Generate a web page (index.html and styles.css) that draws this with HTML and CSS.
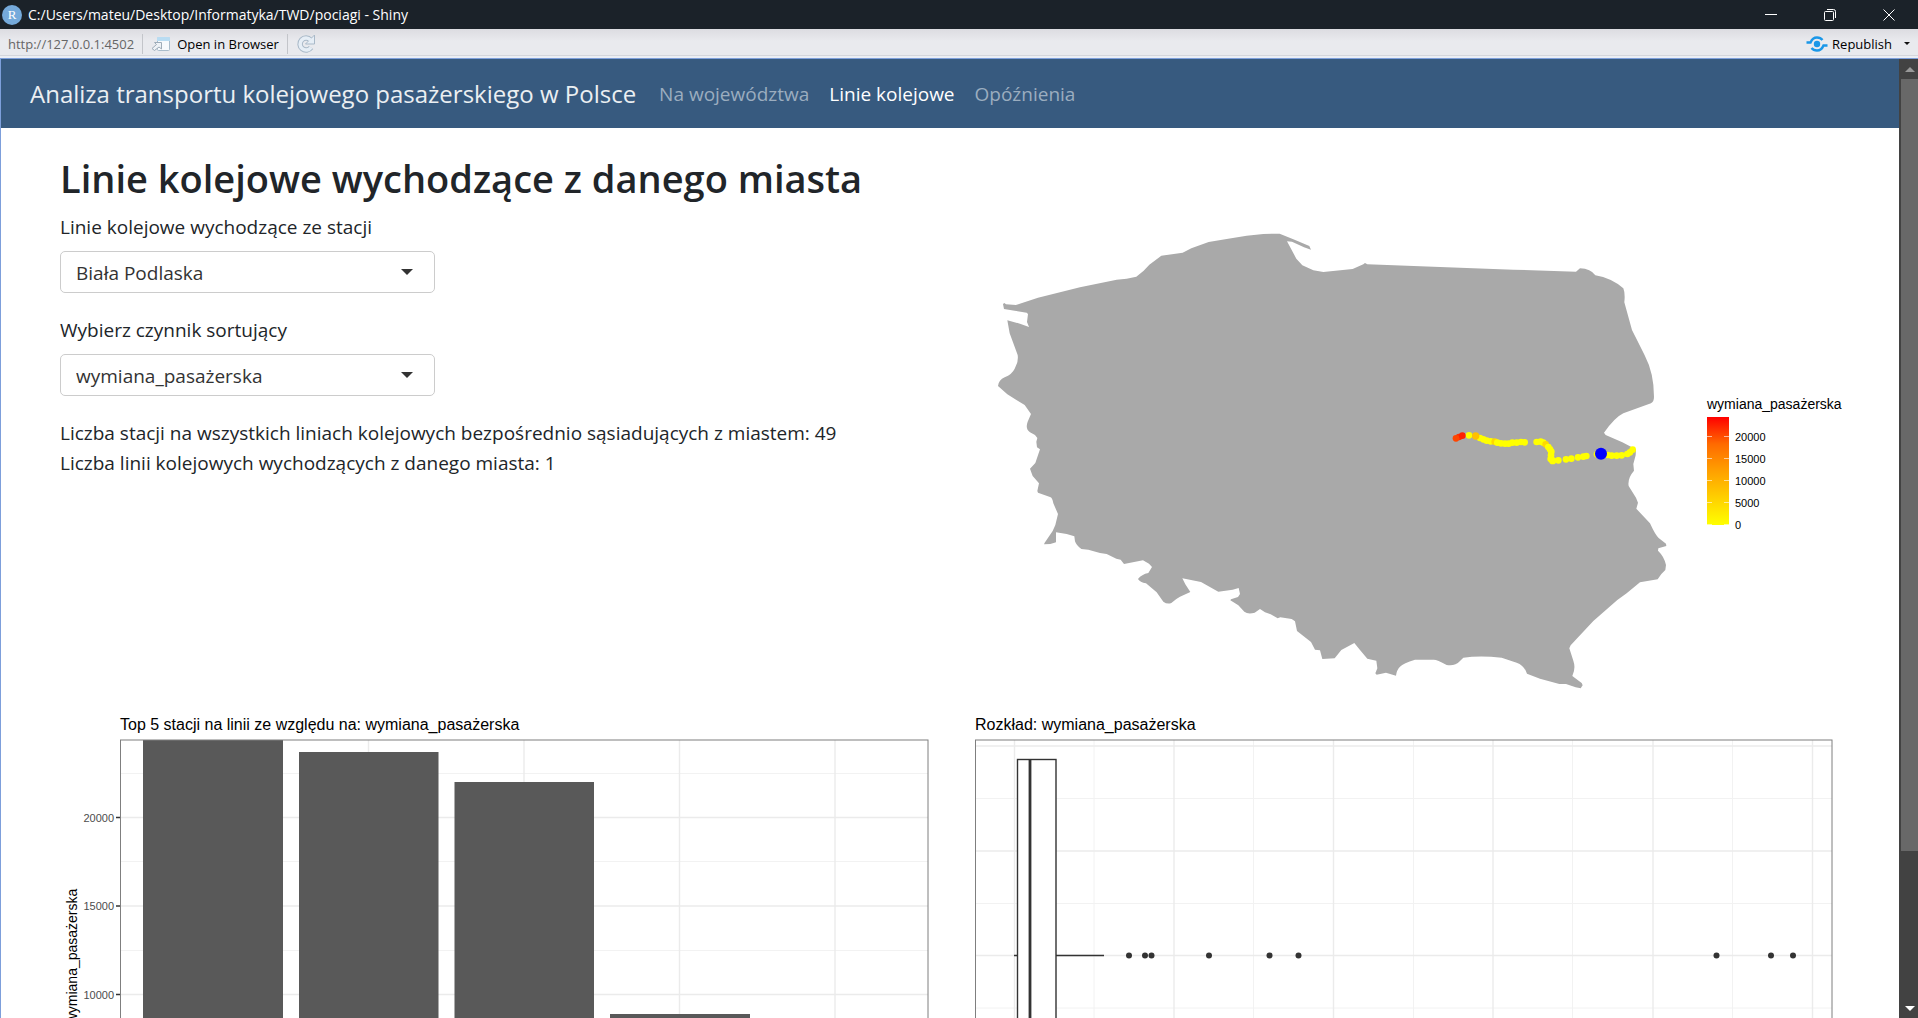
FILE: index.html
```html
<!DOCTYPE html>
<html lang="pl">
<head>
<meta charset="utf-8">
<meta name="viewport" content="width=device-width, initial-scale=1">
<title>C:/Users/mateu/Desktop/Informatyka/TWD/pociagi - Shiny</title>
<link rel="stylesheet" href="styles.css">
</head>
<body>
<div class="window">
  <header class="titlebar">
    <svg class="app-icon" viewBox="0 0 20 20" aria-hidden="true"><circle cx="10" cy="10" r="10" fill="#75aadb"/><text x="10" y="14" text-anchor="middle" class="app-letter">R</text></svg>
    <span class="window-title">C:/Users/mateu/Desktop/Informatyka/TWD/pociagi - Shiny</span>
    <div class="window-buttons">
      <button type="button" aria-label="Minimalizuj"><svg viewBox="0 0 14 14"><path d="M1 6.500H13"/></svg></button>
      <button type="button" aria-label="Przywróć"><svg viewBox="0 0 14 14"><rect x="1.500" y="3.500" width="9" height="9" rx="1"/><path d="M4 1.500H10.500Q12.500 1.500 12.500 3.500V10"/></svg></button>
      <button type="button" aria-label="Zamknij"><svg viewBox="0 0 14 14"><path d="M1.500 1.500L12.500 12.500M12.500 1.500L1.500 12.500"/></svg></button>
    </div>
  </header>

  <div class="toolbar">
    <span class="address">http://127.0.0.1:4502</span>
    <span class="separator"></span>
    <button type="button" class="tool open">
      <svg class="open-icon" viewBox="0 0 20 16" aria-hidden="true">
        <rect x="6.500" y="1.500" width="12" height="13" rx="1" fill="#f7fafd" stroke="#a9bccb"/>
        <path d="M6 5V2Q6 1 7 1H18Q19 1 19 2V5Z" fill="#b9dcf2"/>
        <path d="M3.500 6.500H10.500V13L8 11L3.500 14.500L1 12.500L5.500 8.500Z" fill="#eef2f6" stroke="#9eacb9"/>
      </svg>
      Open in Browser
    </button>
    <span class="separator"></span>
    <button type="button" class="tool" aria-label="Odśwież">
      <svg class="refresh-icon" viewBox="0 0 20 20" aria-hidden="true">
        <path d="M15 13.500A6 6 0 1 1 14.500 6" fill="none" stroke="#a9b9c8" stroke-width="5.500"/>
        <path d="M18.500 1V10H9.500L12.500 7L15 4.500Z" fill="#e6eef6" stroke="#a9b9c8" stroke-linejoin="round"/>
        <path d="M15 13.500A6 6 0 1 1 14.500 6" fill="none" stroke="#e6eef6" stroke-width="3.500"/>
      </svg>
    </button>
    <button type="button" class="tool republish">
      <svg class="republish-icon" viewBox="0 0 22 16" aria-hidden="true">
        <circle cx="11" cy="8" r="3.200" fill="#1a97e8"/>
        <path d="M0.500 6.500H4.500Q6.500 1.500 11 1.500Q14.500 1.500 16.500 4M21.500 9.500H17.500Q15.500 14.500 11 14.500Q7.500 14.500 5.500 12" fill="none" stroke="#1a97e8" stroke-width="2.400"/>
      </svg>
      Republish
      <span class="menu-caret"></span>
    </button>
  </div>

  <div class="viewer">
    <div class="page">
      <nav class="navbar">
        <a class="brand" href="#">Analiza transportu kolejowego pasażerskiego w Polsce</a>
        <a class="nav-link" href="#">Na województwa</a>
        <a class="nav-link active" href="#">Linie kolejowe</a>
        <a class="nav-link" href="#">Opóźnienia</a>
      </nav>

      <main class="content">
        <h1>Linie kolejowe wychodzące z danego miasta</h1>
        <section class="controls">
          <div class="field">
            <label for="station">Linie kolejowe wychodzące ze stacji</label>
            <div class="select-box"><select id="station"><option>Biała Podlaska</option></select></div>
          </div>
          <div class="field">
            <label for="factor">Wybierz czynnik sortujący</label>
            <div class="select-box"><select id="factor"><option>wymiana_pasażerska</option></select></div>
          </div>
          <p>Liczba stacji na wszystkich liniach kolejowych bezpośrednio sąsiadujących z miastem: 49</p>
          <p>Liczba linii kolejowych wychodzących z danego miasta: 1</p>
        </section>

        <svg class="plot map" viewBox="965 213 875 500" role="img" aria-label="Mapa Polski">
          <defs>
            <linearGradient id="heat" x1="0" y1="1" x2="0" y2="0">
              <stop offset="0" stop-color="#ffff00"/><stop offset="0.250" stop-color="#ffd000"/><stop offset="0.500" stop-color="#ffa000"/><stop offset="0.750" stop-color="#ff6a00"/><stop offset="1" stop-color="#ff0000"/>
            </linearGradient>
          </defs>
          <g transform="translate(980 220) scale(0.33333)">
            <path fill="#a9a9a9" d="M69 252L73 249L78 253L108 255L174 233L300 202L410 179L440 176L469 170L491 152L508 134L544 107L608 98L634 85L686 66L740 57L800 47L850 42L899 41L940 58L988 78L993 89L972 82L936 65L921 64L949 116L967 136L1000 151L1030 156L1118 147L1150 133L1155 129L1162 133L1400 142L1600 149L1788 155L1800 145Q1832 146 1846 166Q1894 174 1930 205Q1936 220 1933 247L1956 330L1994 406Q2022 460 2022 530Q2022 545 2013 550L1930 580Q1905 592 1872 638L1877 645L1927 667L1950 679L1968 688L1967 706L1960 732L1962 752Q1942 775 1946 798L1968 833L1974 848L1969 866L2010 910Q2026 945 2036 954L2058 971L2059 978L2035 985L2034 992Q2053 1010 2058 1035L2056 1050Q2042 1062 2033 1078L1980 1087L1940 1120L1912 1140L1840 1203L1772 1276L1768 1285L1780 1322Q1788 1345 1777 1368L1805 1389L1808 1396L1802 1405L1787 1402L1758 1392L1738 1392L1680 1376L1641 1361Q1632 1335 1610 1328L1565 1313Q1500 1306 1450 1313L1440 1323Q1424 1340 1400 1335Q1370 1318 1360 1319L1305 1319Q1270 1330 1260 1340Q1250 1350 1248 1367L1218 1358L1190 1364L1186 1360L1192 1345L1189 1322L1162 1316L1140 1290L1123 1269L1084 1290L1064 1315L1027 1317L1020 1291L1005 1289L993 1266L951 1233L945 1204L935 1197L901 1192L893 1195L872 1183L855 1177L840 1167L824 1178Q804 1184 793 1175L775 1156L751 1141L753 1138L774 1131L780 1122L776 1104L758 1109L715 1115L663 1086L607 1075L616 1093L631 1116L600 1130Q588 1136 574 1149Q562 1154 550 1145L530 1117L498 1090Q480 1087 474 1077Q485 1063 505 1059L516 1041L507 1031L489 1021L432 1032L422 1019L409 1016L380 1002L360 999L325 989L304 987Q288 975 285 964L283 949L260 942L228 937L228 967L211 972L192 973L194 968L218 933L226 915L234 882L220 850Q217 832 210 831L174 818L172 813L177 790L158 768L150 746L166 729L180 688L171 682L169 665L172 654L165 645L150 637Q135 627 143 605L153 582L134 555L82 523L54 498Q56 480 74 472Q96 463 104 446Q116 425 113 405L89 340L82 301L120 311L147 321L141 306L144 282L140 278L104 272L72 267Z"/>
            <g fill="#ffff00">
              <circle cx="1467" cy="646" r="10"/><circle cx="1500" cy="654" r="10"/><circle cx="1510" cy="658" r="10"/><circle cx="1520" cy="662" r="10"/><circle cx="1532" cy="664" r="10"/>
              <circle cx="1487" cy="648" r="11" fill="#ffc000"/><circle cx="1544" cy="665" r="10" fill="#ffd800"/>
              <circle cx="1552" cy="668" r="10"/><circle cx="1563" cy="670" r="10"/><circle cx="1575" cy="671" r="10"/><circle cx="1586" cy="671" r="10"/><circle cx="1597" cy="668" r="10"/><circle cx="1610" cy="668" r="10"/><circle cx="1623" cy="666" r="10"/><circle cx="1634" cy="667" r="10"/>
              <circle cx="1670" cy="666" r="10"/><circle cx="1682" cy="665" r="10"/><circle cx="1690" cy="668" r="10"/><circle cx="1697" cy="673" r="10" fill="#ffd800"/><circle cx="1705" cy="681" r="10"/><circle cx="1710" cy="688" r="10"/><circle cx="1714" cy="695" r="10"/><circle cx="1713" cy="706" r="10"/><circle cx="1712" cy="717" r="10"/><circle cx="1718" cy="722" r="11"/><circle cx="1735" cy="721" r="10"/>
              <circle cx="1758" cy="718" r="10"/><circle cx="1774" cy="716" r="10"/><circle cx="1794" cy="712" r="10"/><circle cx="1810" cy="710" r="10"/><circle cx="1819" cy="708" r="10"/><circle cx="1851" cy="703" r="10"/>
              <circle cx="1883" cy="705" r="10"/><circle cx="1895" cy="707" r="10"/><circle cx="1910" cy="707" r="10"/><circle cx="1925" cy="706" r="10"/><circle cx="1942" cy="702" r="10"/><circle cx="1950" cy="697" r="10"/><circle cx="1958" cy="689" r="10"/>
            </g>
            <circle cx="1437" cy="651" r="10" fill="#ff3000"/><circle cx="1428" cy="655" r="10" fill="#ff4500"/><circle cx="1447" cy="647" r="10" fill="#ff2000"/>
            <circle cx="1863" cy="701" r="18" fill="#0000ff"/>
          </g>
          <text class="axis-title" x="1707" y="409">wymiana_pasażerska</text>
          <rect x="1707" y="417" width="22" height="108" fill="url(#heat)"/>
          <path class="legend-ticks" d="M1707 436.500h5M1724 436.500h5M1707 458.500h5M1724 458.500h5M1707 480.500h5M1724 480.500h5M1707 502.500h5M1724 502.500h5M1707 524.500h5M1724 524.500h5"/>
          <g class="legend-label">
            <text x="1735" y="441">20000</text><text x="1735" y="463">15000</text><text x="1735" y="485">10000</text><text x="1735" y="507">5000</text><text x="1735" y="529">0</text>
          </g>
        </svg>

        <svg class="plot" viewBox="60 713 875 500" role="img" aria-label="Top 5 stacji">
          <text class="plot-title" x="120" y="730">Top 5 stacji na linii ze względu na: wymiana_pasażerska</text>
          <path class="grid-minor" d="M120 773.500H928M120 861.500H928M120 950.500H928M120 1038.500H928M120 1127.500H928"/>
          <path class="grid-major" d="M120 817.500H928M120 906H928M120 994.500H928M120 1083H928M213 740V1171M368.500 740V1171M524 740V1171M679.500 740V1171M835 740V1171"/>
          <g fill="#595959">
            <rect x="143" y="740" width="140" height="431"/><rect x="299" y="752" width="139.500" height="419"/><rect x="454.500" y="782" width="139.500" height="389"/><rect x="610" y="1014" width="140" height="157"/><rect x="766" y="1040" width="139" height="131"/>
          </g>
          <rect class="panel" x="120.500" y="740" width="807.500" height="431"/>
          <path class="ticks" d="M116 817.500H120M116 906H120M116 994.500H120M116 1083H120M116 1171H120"/>
          <g class="tick-label">
            <text x="114" y="822">20000</text><text x="114" y="910">15000</text><text x="114" y="999">10000</text><text x="114" y="1087">5000</text><text x="114" y="1175">0</text>
          </g>
          <text class="axis-title" text-anchor="middle" transform="translate(77 956) rotate(-90)">wymiana_pasażerska</text>
        </svg>

        <svg class="plot" viewBox="965 713 875 500" role="img" aria-label="Rozkład">
          <text class="plot-title" x="975" y="730">Rozkład: wymiana_pasażerska</text>
          <path class="grid-minor" d="M975 798.500H1832M975 903.500H1832M975 1008H1832M975 1112.500H1832M1094 740V1171M1253.500 740V1171M1413.500 740V1171M1572.500 740V1171M1732.500 740V1171"/>
          <path class="grid-major" d="M975 746H1832M975 851H1832M975 955.500H1832M975 1060H1832M975 1165H1832M1014.500 740V1171M1174 740V1171M1333.500 740V1171M1493 740V1171M1653 740V1171M1812.500 740V1171"/>
          <path class="box-line" d="M1014 955.500H1018M1056 955.500H1104"/>
          <rect class="box" x="1017.500" y="759.500" width="38.500" height="392"/>
          <path class="median" d="M1030 759V1152"/>
          <g fill="#333">
            <circle cx="1129" cy="955.500" r="3"/><circle cx="1145" cy="955.500" r="3"/><circle cx="1151.500" cy="955.500" r="3"/><circle cx="1209" cy="955.500" r="3"/><circle cx="1269.500" cy="955.500" r="3"/><circle cx="1298.500" cy="955.500" r="3"/><circle cx="1716.500" cy="955.500" r="3"/><circle cx="1771" cy="955.500" r="3"/><circle cx="1793" cy="955.500" r="3"/>
          </g>
          <rect class="panel" x="975.500" y="740" width="856.500" height="431"/>
        </svg>
      </main>
    </div>
    <div class="scrollbar" aria-hidden="true">
      <span class="arrow up"></span>
      <span class="track"><span class="thumb"></span></span>
      <span class="arrow down"></span>
    </div>
  </div>
</div>
</body>
</html>
```
FILE: styles.css
```css
* { box-sizing: border-box; }

body {
  margin: 0;
  background: #fff;
  color: #212529;
  font-family: "Open Sans", "Noto Sans", sans-serif;
}

button {
  padding: 0;
  border: 0;
  background: none;
  color: inherit;
  font: inherit;
}

svg { display: block; }

.window {
  display: flex;
  flex-direction: column;
  height: 100vh;
}

/* Window title bar */
.titlebar {
  display: flex;
  flex: none;
  align-items: center;
  gap: 6px;
  height: 29px;
  padding-left: 2px;
  background: #1b2229;
  color: #fff;
  font-size: 14px;
  line-height: 20px;
}

.app-icon { width: 20px; height: 20px; }
.app-letter { fill: #fff; font: 13px "Liberation Serif", serif; }
.window-buttons { display: flex; margin-left: auto; }

.window-buttons button {
  display: grid;
  place-items: center;
  width: 59px;
  height: 29px;
}

.window-buttons svg {
  width: 14px;
  height: 14px;
  fill: none;
  stroke: #fff;
}

/* Viewer toolbar */
.toolbar {
  display: flex;
  flex: none;
  align-items: center;
  gap: 8px;
  height: 30px;
  padding: 0 8px;
  border-bottom: 1px solid #7d9fdb;
  background: linear-gradient(#dcdce1, #e9eaee 12px, #e9eaee 26px, #d4d6dc 26px, #d4d6dc 27px, #ebeef4 27px);
  color: #000;
  font-size: 13px;
  line-height: 20px;
}

.address { color: #666; }
.separator { width: 1px; height: 20px; background: #c3c5ca; }
.tool { display: flex; align-items: center; gap: 6px; }
.open-icon { width: 20px; height: 16px; }
.refresh-icon { width: 20px; height: 20px; }
.republish { margin-left: auto; gap: 4px; }
.republish-icon { width: 22px; height: 16px; }

.menu-caret {
  margin-left: 8px;
  border: 3px solid transparent;
  border-top-color: #111;
  border-bottom: 0;
}

/* Page and scrollbar */
.viewer { display: flex; flex: 1; min-height: 0; }

.page {
  flex: 1;
  min-width: 0;
  overflow-y: auto;
  scrollbar-width: none;
  border-left: 1px solid #7d9fdb;
}

.scrollbar {
  display: flex;
  flex: none;
  flex-direction: column;
  width: 19px;
  padding-left: 2px;
  background: #424242;
}

.track { flex: 1; }
.thumb { display: block; height: 84%; background: #686868; }
.arrow { display: grid; flex: none; place-items: center; height: 20px; }
.arrow::before { content: ""; border: 5px solid transparent; }
.up::before { border-top: 0; border-bottom-color: #999; }
.down::before { border-bottom: 0; border-top-color: #fff; }

/* Navigation */
.navbar {
  display: flex;
  align-items: center;
  gap: 20px;
  min-height: 69px;
  padding: 0 29px;
  background: #375a7f;
  font-size: 19px;
}

.navbar a { color: #9badbf; text-decoration: none; }
.navbar .brand { margin-right: 3px; color: #ebeff2; font-size: 24px; }
.navbar .active { color: #fff; }

/* Content */
.content {
  display: grid;
  grid-template-columns: minmax(0, 1fr) minmax(0, 1fr);
  column-gap: 30px;
  padding: 26px 59px 0;
  font-size: 19px;
  line-height: 30px;
}

h1 {
  grid-column: 1 / -1;
  margin: 0 0 10px;
  font-size: 38px;
  font-weight: 600;
  line-height: 48px;
}

.field { margin-bottom: 22px; }
.field label { display: block; margin-bottom: 9px; }
.controls p { margin: 0; }
.select-box { position: relative; max-width: 375px; }

.select-box::after {
  content: "";
  position: absolute;
  top: 18px;
  right: 22px;
  border: 6px solid transparent;
  border-top-color: #333;
  border-bottom: 0;
  pointer-events: none;
}

select {
  display: block;
  width: 100%;
  height: 42px;
  padding: 2px 40px 0 15px;
  border: 1px solid #ccc;
  border-radius: 5px;
  appearance: none;
  background: #fff;
  color: #333;
  font: inherit;
}

/* Plots */
.plot {
  width: 100%;
  height: auto;
  overflow: visible;
  font-family: "Liberation Sans", Arial, sans-serif;
}

.map { margin-top: 1px; }
.plot-title { font-size: 16px; }
.axis-title { font-size: 14px; }
.legend-label, .tick-label { font-size: 11px; }
.tick-label { fill: #4d4d4d; text-anchor: end; }
.grid-minor { fill: none; stroke: #f2f2f2; }
.grid-major { fill: none; stroke: #ebebeb; stroke-width: 1.400; }
.panel { fill: none; stroke: #7f7f7f; }
.ticks { stroke: #333; stroke-width: 1.400; }
.legend-ticks { stroke: #fff; stroke-opacity: 0.600; }
.box-line { stroke: #333; stroke-width: 1.400; }
.box { fill: #fff; stroke: #333; stroke-width: 1.400; }
.median { stroke: #333; stroke-width: 2.800; }
```
